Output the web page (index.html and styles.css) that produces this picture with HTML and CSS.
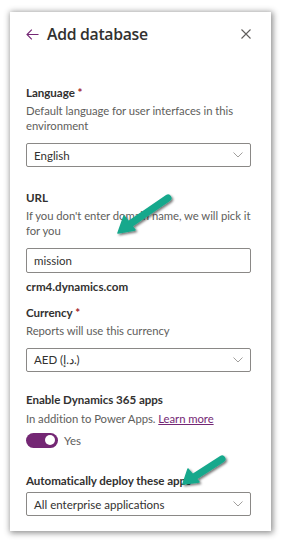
FILE: index.html
```html
<!doctype html>
<html lang="en">
	<head>
		<meta charset="UTF-8" />
		<meta name="viewport" content="width=device-width, initial-scale=1.0" />
		<title>Add database</title>
		<link rel="stylesheet" href="styles.css">
	</head>
	<body>
		<div class="panel">
			<div class="header">
				<span class="back">
					<svg width="13" height="11" viewBox="0 0 13 11"><path d="M12.5 5.5H1M5.8 0.7L1 5.5l4.8 4.8" fill="none" stroke="#742774" stroke-width="1.1"/></svg>
				</span>
				<h1>Add database</h1>
				<span class="close">
					<svg width="10" height="10" viewBox="0 0 10 10"><path d="M0.5 0.5l9 9M9.5 0.5l-9 9" fill="none" stroke="#605e5c" stroke-width="1.1"/></svg>
				</span>
			</div>

			<div class="field lang">
				<div class="label">Language <span class="req">*</span></div>
				<div class="desc">Default language for user interfaces in this environment</div>
				<div class="select">
					<span>English</span>
					<svg class="chev" width="10" height="6" viewBox="0 0 10 6"><path d="M0.5 0.5L5 5l4.5-4.5" fill="none" stroke="#a19f9d" stroke-width="1"/></svg>
				</div>
			</div>

			<div class="field url">
				<div class="label">URL</div>
				<div class="desc">If you don't enter domain name, we will pick it for you</div>
				<div class="input">mission</div>
				<div class="suffix">crm4.dynamics.com</div>
			</div>

			<div class="field currency">
				<div class="label">Currency <span class="req">*</span></div>
				<div class="desc">Reports will use this currency</div>
				<div class="select">
					<span>AED (د.إ.)</span>
					<svg class="chev" width="10" height="6" viewBox="0 0 10 6"><path d="M0.5 0.5L5 5l4.5-4.5" fill="none" stroke="#a19f9d" stroke-width="1"/></svg>
				</div>
			</div>

			<div class="field apps">
				<div class="label">Enable Dynamics 365 apps</div>
				<div class="desc">In addition to Power Apps. <a href="#">Learn more</a></div>
				<div class="toggle-row">
					<span class="toggle"><span class="knob"></span></span>
					<span class="toggle-text">Yes</span>
				</div>
			</div>

			<div class="field deploy">
				<div class="label">Automatically deploy these apps</div>
				<div class="select">
					<span>All enterprise applications</span>
					<svg class="chev" width="10" height="6" viewBox="0 0 10 6"><path d="M0.5 0.5L5 5l4.5-4.5" fill="none" stroke="#a19f9d" stroke-width="1"/></svg>
				</div>
			</div>
		</div>

		<!-- annotation arrows drawn over the screenshot -->
		<svg class="notes" width="281" height="541" viewBox="0 0 281 541">
			<defs>
				<filter id="sh" x="-20%" y="-20%" width="140%" height="140%">
					<feDropShadow dx="1.5" dy="1.5" stdDeviation="1" flood-color="#000" flood-opacity="0.55"/>
				</filter>
			</defs>
			<g filter="url(#sh)" fill="#17a88c" stroke="#17a88c">
				<line x1="168" y1="198" x2="130" y2="224" stroke-width="7" stroke-linecap="round"/>
				<polygon points="118,233 124,216 135,230" stroke-width="1.5" stroke-linejoin="round"/>
				<line x1="222" y1="459" x2="194" y2="477" stroke-width="7" stroke-linecap="round"/>
				<polygon points="183,484 188,469 199,482" stroke-width="1.5" stroke-linejoin="round"/>
			</g>
		</svg>
	</body>
</html>
```

FILE: styles.css
```css
body { margin: 0; padding: 12px 10px 10px 10px; background: #fff; font-family: Lato, "Liberation Sans", sans-serif; color: #323130; position: relative; width: 261px; }
.panel { height: 519px; box-sizing: border-box; padding: 0 20px 0 16px; background: #fff; box-shadow: 1px 1px 6px 1px rgba(0, 0, 0, 0.45); }
.header { display: flex; align-items: center; height: 44px; }
.back { display: flex; margin-right: 8px; }
h1 { flex: 1; margin: 0; font-family: "Open Sans", sans-serif; font-size: 15.8px; font-weight: 600; letter-spacing: -0.3px; }
.close { display: flex; }
.label { font-size: 11.6px; font-weight: 700; line-height: 15px; letter-spacing: -0.05px; }
.req { color: #a4262c; }
.desc { margin-top: 3px; font-size: 11.3px; line-height: 15px; color: #605e5c; letter-spacing: -0.05px; }
.desc a { color: #742774; }
.select, .input { margin-top: 10.5px; height: 24px; box-sizing: border-box; border: 1px solid #8a8886; border-radius: 2px; display: flex; align-items: center; padding: 0 7px; font-size: 11.5px; }
.input { height: 25px; }
.select span { flex: 1; }
.field.lang { margin-top: 28.5px; }
.field.url { margin-top: 22.5px; }
.field.currency { margin-top: 11px; }
.field.apps { margin-top: 19.5px; }
.field.apps .desc { margin-top: 4px; }
.field.deploy { margin-top: 25px; }
.field.deploy .select { margin-top: 4.5px; }
.suffix { margin-top: 5.5px; font-size: 11.6px; font-weight: 700; line-height: 15px; }
.toggle-row { display: flex; align-items: center; margin-top: 7px; }
.toggle { width: 32px; height: 15px; border-radius: 8px; background: #742774; position: relative; }
.knob { position: absolute; right: 3px; top: 2.5px; width: 10px; height: 10px; border-radius: 50%; background: #fff; }
.toggle-text { margin-left: 6px; font-size: 11.5px; color: #605e5c; }
.notes { position: absolute; left: 0; top: 0; pointer-events: none; }
```
